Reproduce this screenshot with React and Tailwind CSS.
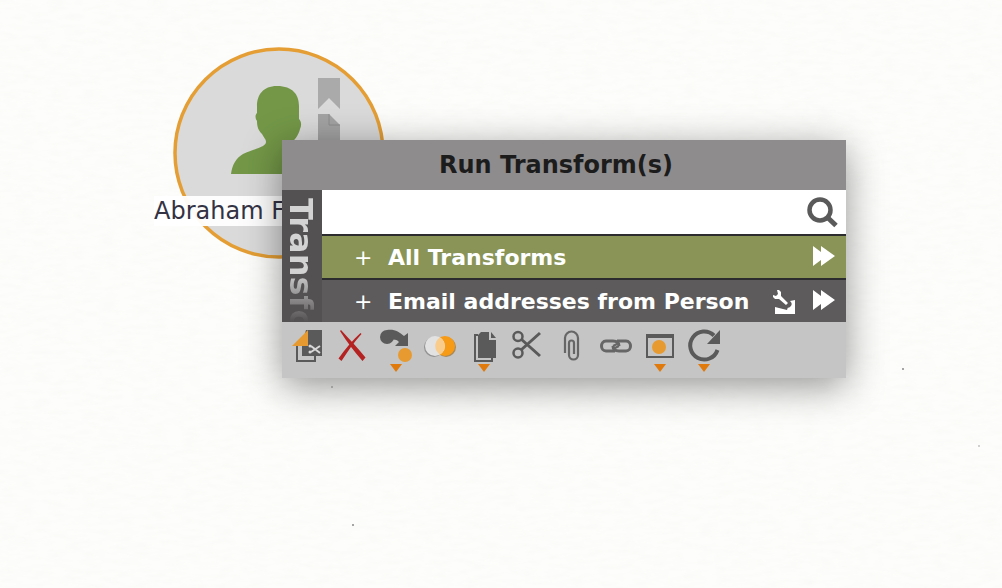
const triangleMark = <path d="M16 42h12l-6 8z" fill="#e07a0c" />;

const tools = [
  {
    name: "Cut to new graph",
    menu: false,
    art: (
      <>
        <path d="M20 8h16v26H16V22z" fill="#5a5a5a" />
        <path d="M11 24v15h18v-5" fill="none" stroke="#5a5a5a" strokeWidth="2" />
        <path d="M22 8v16H6z" fill="#e79a2f" />
        <path d="M25 24l9 7M25 30l9-6" stroke="#d8d8d8" strokeWidth="2" />
        <circle cx="24" cy="24" r="1.5" fill="#d8d8d8" />
        <circle cx="24" cy="30" r="1.5" fill="#d8d8d8" />
      </>
    ),
  },
  {
    name: "Delete",
    menu: false,
    art: (
      <g fill="#b52222">
        <path d="M10 9l1-1C19 17 28 26 35.500 35.500l-3 3.500C24 29 17 20 10 9z" />
        <path d="M31.500 12l-1-1C23 18 15 27 8.500 36.500l3 2.500C18 29 24 20 31.500 12z" />
      </g>
    ),
  },
  {
    name: "Change type",
    menu: true,
    art: (
      <>
        <circle cx="13" cy="15" r="7" fill="#5a5a5a" />
        <path d="M13 8c8-1 12 2 17 6l4-3v13H21l4-4c-3-3-7-3-9-1z" fill="#5a5a5a" />
        <circle cx="31" cy="33" r="7" fill="#e79a2f" />
      </>
    ),
  },
  {
    name: "Merge",
    menu: false,
    art: (
      <>
        <circle cx="16" cy="25" r="10" fill="#929292" />
        <circle cx="28" cy="25" r="10" fill="#a88a5a" />
        <circle cx="27" cy="24" r="10" fill="#f79a16" />
        <circle cx="17" cy="24" r="10" fill="#e2e2e2" />
        <path d="M22 15.500a10 10 0 0 1 0 17a10 10 0 0 1 0-17z" fill="#f9cc8b" />
      </>
    ),
  },
  {
    name: "Copy",
    menu: true,
    art: (
      <>
        <path d="M16 13h-3v26h17v-3" fill="none" stroke="#5a5a5a" strokeWidth="2" />
        <path d="M19 10h8v8h7v18H16V13z" fill="#5a5a5a" />
        <path d="M29 10l5 6h-5z" fill="#5a5a5a" />
      </>
    ),
  },
  {
    name: "Cut",
    menu: false,
    art: (
      <g fill="none" stroke="#5a5a5a" strokeWidth="2.5">
        <circle cx="12" cy="14.500" r="4.500" />
        <circle cx="12" cy="31" r="4.500" />
        <path d="M15 17L34 34M15 28L34 11" strokeWidth="3" />
      </g>
    ),
  },
  {
    name: "Attachments",
    menu: false,
    art: (
      <path
        d="M15 31V16a6.500 6.500 0 0 1 13 0v17a4.500 4.500 0 0 1-9 0V21a2.500 2.500 0 0 1 5 0v11"
        fill="none"
        stroke="#666"
        strokeWidth="2.2"
      />
    ),
  },
  {
    name: "Link",
    menu: false,
    art: (
      <g fill="none" stroke="#666" strokeWidth="3">
        <path d="M21 29H12c-6 0-6-10 0-10h7c4 0 6 2 6 5" />
        <path d="M23 19h9c6 0 6 10 0 10h-7c-4 0-6-2-6-5" />
        <path d="M19 24l6-3M19 27l6-3" strokeWidth="2" />
      </g>
    ),
  },
  {
    name: "Select",
    menu: true,
    art: (
      <>
        <path d="M8 12h28v24H8zM10 16v18h24V16z" fill="#5a5a5a" fillRule="evenodd" />
        <circle cx="21" cy="25" r="7" fill="#e79a2f" />
      </>
    ),
  },
  {
    name: "Refresh",
    menu: true,
    art: (
      <>
        <path d="M32 13.500A14 14 0 1 0 35.500 28" fill="none" stroke="#5a5a5a" strokeWidth="4" />
        <path d="M38 8v14H25z" fill="#5a5a5a" />
      </>
    ),
  },
];

const FastForward = () => (
  <svg viewBox="0 0 24 20" className="h-5 w-6" fill="#fff" aria-hidden="true">
    <path d="M1 0l8 6V0l14 10-14 10v-6l-8 6z" />
  </svg>
);

const Wrench = () => (
  <svg viewBox="0 0 24 24" className="h-6 w-6" aria-hidden="true">
    <path d="M3 24v-7l12 3 3-9 5-1v14z" fill="#fff" />
    <path d="M8 6l8 8" stroke="#5d5b5c" strokeWidth="7" strokeLinecap="round" />
    <path
      d="M5 0h2l2 2v4l7 7-2 2-7-6H3L1 7V5l3 1 2-2z"
      fill="#fff"
    />
  </svg>
);

function TransformRow({ label, tone, settings }) {
  return (
    <li className={`flex h-11 items-center border-t-2 border-[#2c2b2d] pt-0.5 pr-2.5 ${tone}`}>
      <button type="button" className="flex h-full flex-1 items-center gap-4 pl-8 text-left">
        <span className="w-[18px] text-center font-normal">+</span>
        <span className="font-bold">{label}</span>
      </button>
      {settings && (
        <button type="button" aria-label="Transform settings" className="mr-4">
          <Wrench />
        </button>
      )}
      <button type="button" aria-label={`Run ${label}`} className="mb-1">
        <FastForward />
      </button>
    </li>
  );
}

function PersonNode() {
  return (
    <div className="absolute top-[47px] left-[154px] w-[250px]">
      <svg viewBox="0 0 250 212" className="block w-full" aria-hidden="true">
        <circle cx="125" cy="106" r="104" fill="#dadada" stroke="#e49e34" strokeWidth="3.5" />
        <path
          d="M123 39c16 0 22 9 22 20v13c2 2 3 6 1 10-1 5-4 9-9 15v4c0 5 6 6 16 10 11 4 16 8 18 16H77c1-9 5-16 12-20 11-5 23-7 23-12 0-3-2-4-4-8-4-4-5-8-5-13-2-3-2-6 0-8V59c0-11 6-20 20-20z"
          fill="#739747"
        />
        <path d="M164 31h22v31L175 51l-11 11z" fill="#aaa" />
        <path d="M164 67h11l11 11v30h-22z" fill="#a3a3a3" />
        <path d="M175 67v11h11" fill="none" stroke="#8c8c8c" strokeWidth="1" />
      </svg>
      <span className="absolute top-[149px] left-0 bg-white/95 text-2xl leading-[30px] whitespace-nowrap text-[#333344]">
        Abraham F
      </span>
    </div>
  );
}

export default function App() {
  return (
    <main className="relative min-h-screen overflow-hidden bg-[#fdfdfb] font-['DejaVu_Sans',sans-serif]">
      <svg className="absolute inset-0 h-full w-full" aria-hidden="true">
        <filter id="paper">
          <feTurbulence type="fractalNoise" baseFrequency="0.06 0.2" numOctaves="4" seed="4" />
          <feColorMatrix values="0 0 0 0 0.5  0 0 0 0 0.5  0 0 0 0 0.45  0.08 0 0 0 -0.03" />
        </filter>
        <rect width="100%" height="100%" filter="url(#paper)" />
        <g fill="#888">
          <circle cx="903" cy="369" r="1" />
          <circle cx="353" cy="525" r="1" />
          <circle cx="979" cy="446" r="1" opacity="0.5" />
          <circle cx="332" cy="387" r="1" opacity="0.6" />
        </g>
      </svg>

      <PersonNode />

      <section
        aria-label="Run Transform(s)"
        className="absolute top-[140px] left-[282px] w-[564px] bg-[#c5c5c5] shadow-[0_8px_36px_0_rgba(0,0,0,0.42)]"
      >
        <h1 className="h-[50px] bg-[#8f8c8d] pr-4 text-center text-2xl leading-[50px] font-bold text-[#1c1c1c]">
          Run Transform(s)
        </h1>
        <div className="flex h-[132px]">
          <div className="w-10 overflow-hidden bg-[#545152] pt-2">
            <div className="h-full bg-linear-to-b from-[#d3d3d3] from-60% to-[#545152] to-100% bg-clip-text text-[32px] leading-[38px] font-bold text-transparent [writing-mode:vertical-rl]">
              Transforms
            </div>
          </div>
          <div className="min-w-0 flex-1">
            <label className="flex h-11 items-center bg-white pr-2">
              <input
                type="text"
                aria-label="Search transforms"
                className="h-full min-w-0 flex-1 px-3 text-[22px] outline-none"
              />
              <svg viewBox="0 0 32 32" className="h-8 w-8" fill="none" stroke="#5a5a5a" aria-hidden="true">
                <circle cx="14" cy="14" r="10.500" strokeWidth="4.5" />
                <path d="M21 21l9 8.500" strokeWidth="5" />
              </svg>
            </label>
            <ul className="text-[22px] leading-7 text-white">
              <TransformRow label="All Transforms" tone="bg-[#899456]" />
              <TransformRow label="Email addresses from Person" tone="bg-[#5d5b5c]" settings />
            </ul>
          </div>
        </div>
        <div role="toolbar" aria-label="Entity actions" className="flex px-1">
          {tools.map((tool) => (
            <button key={tool.name} type="button" aria-label={tool.name}>
              <svg viewBox="0 0 44 56" className="block h-14 w-11" aria-hidden="true">
                {tool.art}
                {tool.menu && triangleMark}
              </svg>
            </button>
          ))}
        </div>
      </section>
    </main>
  );
}
